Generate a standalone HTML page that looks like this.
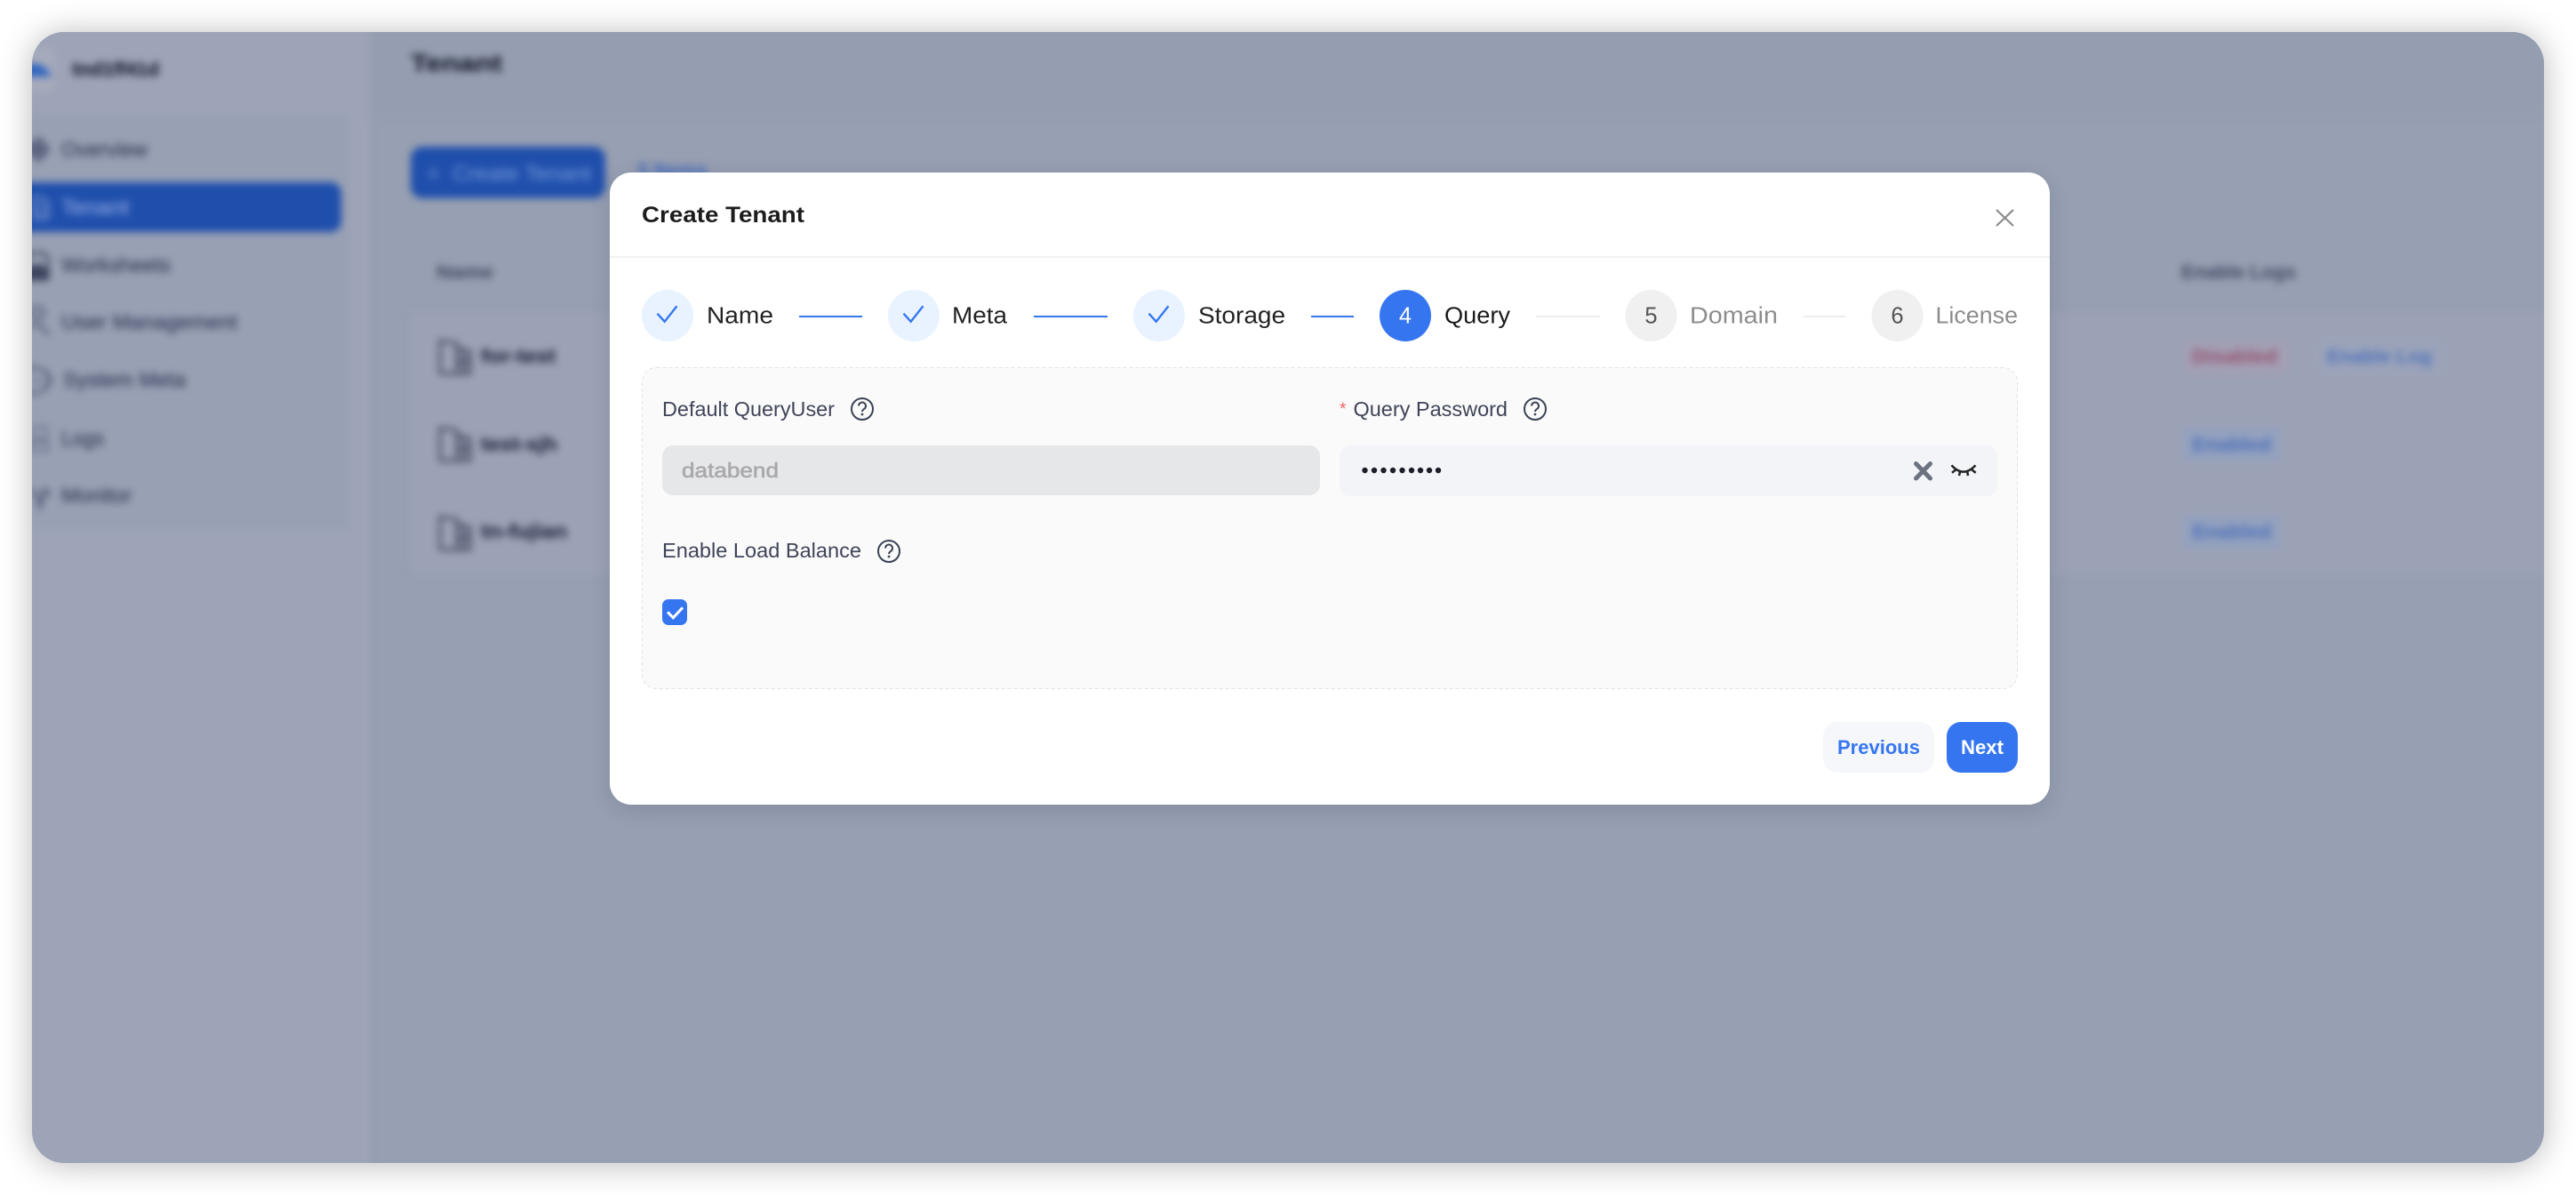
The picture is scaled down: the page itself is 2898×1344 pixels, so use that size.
<!DOCTYPE html>
<html>
<head>
<meta charset="utf-8">
<style>
html,body{margin:0;padding:0;width:2898px;height:1344px;background:#fff;overflow:hidden}
#card{position:absolute;left:36px;top:36px;width:2826px;height:1272px;border-radius:36px;box-shadow:0 2px 36px rgba(0,0,0,.28)}
#modalshadow{position:absolute;left:686px;top:194px;width:1620px;height:711px;border-radius:24px;box-shadow:0 6px 24px rgba(20,30,60,.14)}
svg{position:absolute;left:0;top:0}
text{font-family:"Liberation Sans",sans-serif}
</style>
</head>
<body>
<div id="card"></div>
<svg width="2898" height="1344" viewBox="0 0 2898 1344" xmlns="http://www.w3.org/2000/svg">
<defs>
<clipPath id="c"><rect x="36" y="36" width="2826" height="1272" rx="36"/></clipPath>
<filter id="b" filterUnits="userSpaceOnUse" x="0" y="0" width="2898" height="1344" color-interpolation-filters="sRGB"><feGaussianBlur stdDeviation="4.200"/></filter>
</defs>
<g clip-path="url(#c)">
<rect x="36" y="36" width="2826" height="1272" fill="#979fb2"/>
<g filter="url(#b)">
<rect x="0" y="0" width="416" height="1344" fill="#9ea4b7"/>
<rect x="416" y="0" width="2482" height="130" fill="#959db0"/>
<rect x="0" y="130" width="393" height="466" fill="#98a0b4"/>
<rect x="462" y="352" width="2440" height="294" fill="#9ca2b6"/>
<rect x="462" y="454" width="2440" height="1" fill="#989fb2"/>
<rect x="462" y="543" width="2440" height="1" fill="#989fb2"/>
<!-- logo -->
<rect x="18" y="54" width="43" height="50" rx="8" fill="#a6abbc"/>
<path d="M24 86C26 68 48 66 58 86Z" fill="#2d62c0"/>
<text x="81" y="85" font-size="21" font-weight="700" fill="#20263c" stroke="#20263c" stroke-width=".6" textLength="98" lengthAdjust="spacingAndGlyphs">tnd1ff41d</text>
<!-- nav -->
<rect x="10" y="205" width="374" height="56" rx="12" fill="#1f4fac"/>
<path d="M44 153L50 160 57 168 50 176 44 183 36 176 26 168 36 160Z" fill="#5d6580"/>
<path d="M30 285h20l4 4v25h-24z" fill="none" stroke="#3c435c" stroke-width="3"/>
<path d="M30 302l12-6 12 6v12h-24z" fill="#3c435c"/>
<g fill="none" stroke="#515a76" stroke-width="3">
<circle cx="42" cy="352" r="7"/>
<path d="M32 366h14l9 11" />
<path d="M48 414l9 13-9 14M34 414h10M34 442h10M38 428h6" stroke-width="4"/>
<path d="M38 480h14v14h-14zM36 497h18v10h-18z" stroke="#717892"/>
<path d="M34 552l7 2 4 16 6-20 5 8" stroke-width="3.500"/>
</g>
<path d="M38 222h10l6 6v18h-16zM38 232h16M38 240h16" fill="none" stroke="#6d89c8" stroke-width="3"/>
<g font-size="23" fill="#3c4460" stroke="#3c4460" stroke-width=".5">
<text x="69" y="176" textLength="97" lengthAdjust="spacingAndGlyphs">Overview</text>
<text x="69" y="241" textLength="76" lengthAdjust="spacingAndGlyphs" fill="#86a0dc" stroke="#86a0dc">Tenant</text>
<text x="69" y="306" textLength="123" lengthAdjust="spacingAndGlyphs">Worksheets</text>
<text x="69" y="370" textLength="198" lengthAdjust="spacingAndGlyphs">User Management</text>
<text x="71" y="435" textLength="138" lengthAdjust="spacingAndGlyphs">System Meta</text>
<text x="69" y="501" textLength="48" lengthAdjust="spacingAndGlyphs">Logs</text>
<text x="69" y="565" textLength="79" lengthAdjust="spacingAndGlyphs">Monitor</text>
</g>
<!-- main top -->
<text x="462" y="80" font-size="27" font-weight="700" fill="#1e2436" stroke="#1e2436" stroke-width=".5" textLength="103" lengthAdjust="spacingAndGlyphs">Tenant</text>
<rect x="462" y="165" width="219" height="58" rx="13" fill="#1f4fac"/>
<path d="M481 195h13M487.500 188v14" stroke="#5a80c8" stroke-width="2.500"/>
<text x="509" y="203" font-size="23" fill="#6a8fd4" stroke="#6a8fd4" stroke-width=".4" textLength="156" lengthAdjust="spacingAndGlyphs">Create Tenant</text>
<text x="716" y="199" font-size="22" font-weight="700" fill="#3f67bb" textLength="80" lengthAdjust="spacingAndGlyphs">3 Items</text>
<text x="491" y="313" font-size="21" font-weight="700" fill="#404763" textLength="64" lengthAdjust="spacingAndGlyphs">Name</text>
<text x="2454" y="313" font-size="21" font-weight="700" fill="#404763" textLength="129" lengthAdjust="spacingAndGlyphs">Enable Logs</text>
<!-- rows -->
<g fill="none" stroke="#3f465c" stroke-width="3">
<path d="M495 420v-37l19 3v34zM514 392l15 3v25h-15M521.500 394v26M514 407h15M495 420h34"/>
<path d="M495 518v-37l19 3v34zM514 490l15 3v25h-15M521.500 492v26M514 505h15M495 518h34"/>
<path d="M495 618v-37l19 3v34zM514 590l15 3v25h-15M521.500 592v26M514 605h15M495 618h34"/>
</g>
<g font-size="22" font-weight="700" fill="#252b42" stroke="#252b42" stroke-width=".4">
<text x="541" y="408" textLength="84" lengthAdjust="spacingAndGlyphs">for-test</text>
<text x="541" y="507" textLength="86" lengthAdjust="spacingAndGlyphs">test-sjh</text>
<text x="541" y="605" textLength="97" lengthAdjust="spacingAndGlyphs">tn-fujian</text>
</g>
<!-- tags -->
<rect x="2456" y="382" width="118" height="38" rx="6" fill="#a39fb4"/>
<text x="2466" y="408" font-size="21" font-weight="700" fill="#94526f" textLength="96" lengthAdjust="spacingAndGlyphs">Disabled</text>
<rect x="2609" y="382" width="139" height="38" rx="6" fill="#9ba3ba"/>
<text x="2618" y="408" font-size="21" font-weight="700" fill="#4f73bb" textLength="118" lengthAdjust="spacingAndGlyphs">Enable Log</text>
<rect x="2456" y="480" width="110" height="39" rx="6" fill="#94a1bf"/>
<text x="2466" y="507" font-size="21" font-weight="700" fill="#4a6fb8" textLength="89" lengthAdjust="spacingAndGlyphs">Enabled</text>
<rect x="2456" y="579" width="110" height="39" rx="6" fill="#94a1bf"/>
<text x="2466" y="605" font-size="21" font-weight="700" fill="#4a6fb8" textLength="89" lengthAdjust="spacingAndGlyphs">Enabled</text>
</g>
</g>
</svg>
<div id="modalshadow"></div>
<svg width="2898" height="1344" viewBox="0 0 2898 1344" xmlns="http://www.w3.org/2000/svg">
<!-- modal -->
<rect x="686" y="194" width="1620" height="711" rx="24" fill="#fff"/>
<rect x="686" y="288" width="1620" height="2" fill="#f0f0f2"/>
<text x="722" y="250" font-size="25" font-weight="700" fill="#1c1c1e" textLength="183" lengthAdjust="spacingAndGlyphs">Create Tenant</text>
<path d="M2246 236L2265 254M2265 236L2246 254" stroke="#8a8a8a" stroke-width="2.200" fill="none"/>
<!-- steps -->
<circle cx="751" cy="355" r="29" fill="#e8f3ff"/>
<circle cx="1028" cy="355" r="29" fill="#e8f3ff"/>
<circle cx="1304" cy="355" r="29" fill="#e8f3ff"/>
<circle cx="1581" cy="355" r="29" fill="#3576f0"/>
<circle cx="1857.500" cy="355" r="29" fill="#f0f0f0"/>
<circle cx="2134.500" cy="355" r="29" fill="#f0f0f0"/>
<g fill="none" stroke="#3576f0" stroke-width="2.400">
<path d="M739.500 352.700L747.700 361.700 761.500 344.300"/>
<path d="M1016.500 352.700L1024.700 361.700 1038.500 344.300"/>
<path d="M1292.500 352.700L1300.700 361.700 1314.500 344.300"/>
</g>
<rect x="899" y="355" width="71" height="2" fill="#3576f0"/>
<rect x="1163" y="355" width="83" height="2" fill="#3576f0"/>
<rect x="1475" y="355" width="48" height="2" fill="#3576f0"/>
<rect x="1728" y="355" width="72" height="2" fill="#ececec"/>
<rect x="2029" y="355" width="47" height="2" fill="#ececec"/>
<g font-size="25.500">
<text x="795" y="363.500" fill="#222" textLength="75" lengthAdjust="spacingAndGlyphs">Name</text>
<text x="1071" y="363.500" fill="#222" textLength="62" lengthAdjust="spacingAndGlyphs">Meta</text>
<text x="1348" y="363.500" fill="#222" textLength="98" lengthAdjust="spacingAndGlyphs">Storage</text>
<text x="1625" y="363.500" fill="#1a1a1a" textLength="74" lengthAdjust="spacingAndGlyphs">Query</text>
<text x="1901" y="363.500" fill="#8c8c8c" textLength="99" lengthAdjust="spacingAndGlyphs">Domain</text>
<text x="2177.500" y="363.500" fill="#8c8c8c" textLength="92.500" lengthAdjust="spacingAndGlyphs">License</text>
<text x="1581" y="363.500" fill="#fff" text-anchor="middle">4</text>
<text x="1857.500" y="363.500" fill="#555" text-anchor="middle">5</text>
<text x="2134.500" y="363.500" fill="#555" text-anchor="middle">6</text>
</g>
<!-- panel -->
<rect x="722.500" y="413.500" width="1547" height="361" rx="16" fill="#fafafa" stroke="#e2e2e2" stroke-width="1" stroke-dasharray="4 3"/>
<g font-size="23" fill="#3f4458">
<text x="745" y="468" textLength="194" lengthAdjust="spacingAndGlyphs">Default QueryUser</text>
<text x="1522.500" y="468" textLength="173.500" lengthAdjust="spacingAndGlyphs">Query Password</text>
<text x="745" y="627" textLength="224" lengthAdjust="spacingAndGlyphs">Enable Load Balance</text>
</g>
<text x="1507" y="466" font-size="19" fill="#f0625d">*</text>
<g fill="none" stroke="#3b4256" stroke-width="2">
<circle cx="970" cy="460" r="12"/><path d="M966 456.500a4 4 0 1 1 6.300 3.300c-1.500 1-2.300 1.700-2.300 3.200"/>
<circle cx="1727" cy="460" r="12"/><path d="M1723 456.500a4 4 0 1 1 6.300 3.300c-1.500 1-2.300 1.700-2.300 3.200"/>
<circle cx="1000" cy="620" r="12"/><path d="M996 616.500a4 4 0 1 1 6.300 3.300c-1.500 1-2.300 1.700-2.300 3.200"/>
</g>
<g fill="#3b4256"><circle cx="970" cy="466" r="1.400"/><circle cx="1727" cy="466" r="1.400"/><circle cx="1000" cy="626" r="1.400"/></g>
<!-- inputs -->
<rect x="745" y="501" width="740" height="56" rx="12" fill="#e6e7e9"/>
<text x="767" y="537" font-size="23" fill="#a9a9ab" stroke="#a9a9ab" stroke-width=".6" textLength="109" lengthAdjust="spacingAndGlyphs">databend</text>
<rect x="1507" y="501" width="740" height="57" rx="12" fill="#f3f4f8"/>
<g fill="#1d1f28">
<circle cx="1535.500" cy="529" r="3.200"/><circle cx="1546" cy="529" r="3.200"/><circle cx="1556.500" cy="529" r="3.200"/><circle cx="1567" cy="529" r="3.200"/><circle cx="1577.500" cy="529" r="3.200"/><circle cx="1588" cy="529" r="3.200"/><circle cx="1598" cy="529" r="3.200"/><circle cx="1608" cy="529" r="3.200"/><circle cx="1618" cy="529" r="3.200"/>
</g>
<path d="M2155.500 521.500L2171.500 538M2171.500 521.500L2155.500 538" stroke="#6b7280" stroke-width="5" stroke-linecap="round" fill="none"/>
<path d="M2195.500 523.300Q2208.800 538 2222.500 523.300M2196 531.700L2200.300 528.300M2222.700 531.700L2218.300 528.300M2205 530.700L2204 535M2213.300 530.700L2214 535" stroke="#222" stroke-width="2.500" fill="none"/>
<!-- checkbox -->
<rect x="745" y="674" width="28" height="29" rx="7" fill="#3576f0"/>
<path d="M751 688.300L757.300 694.800 768 683.300" stroke="#fff" stroke-width="3" fill="none"/>
<!-- buttons -->
<rect x="2051" y="812" width="125" height="57" rx="16" fill="#f6f7fb"/>
<text x="2067" y="848" font-size="22.500" font-weight="700" fill="#3576f0" textLength="93" lengthAdjust="spacingAndGlyphs">Previous</text>
<rect x="2190" y="812" width="80" height="57" rx="16" fill="#3576f0"/>
<text x="2206" y="848" font-size="22.500" font-weight="700" fill="#fff" textLength="48" lengthAdjust="spacingAndGlyphs">Next</text>
</svg>
</body>
</html>
